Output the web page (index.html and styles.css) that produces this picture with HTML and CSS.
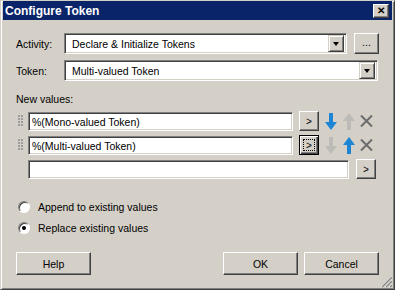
FILE: index.html
```html
<!DOCTYPE html>
<html lang="en">
<head>
<meta charset="UTF-8">
<title>Configure Token</title>
<link rel="stylesheet" href="styles.css">
</head>
<body>
<div class="window">
  <div class="titlebar">
    <span class="title">Configure Token</span>
    <span class="close">&#x2715;</span>
  </div>

  <div class="content">
    <div class="row first">
      <span class="label">Activity:</span>
      <div class="combo w283">
        <span class="combo-text">Declare &amp; Initialize Tokens</span>
        <span class="drop"><i></i></span>
      </div>
      <span class="btn dots">...</span>
    </div>

    <div class="row second">
      <span class="label">Token:</span>
      <div class="combo w314">
        <span class="combo-text">Multi-valued Token</span>
        <span class="drop"><i></i></span>
      </div>
    </div>

    <div class="section">New values:</div>

    <div class="values">
      <div class="vrow">
        <span class="grip"></span>
        <div class="field w265">%(Mono-valued Token)</div>
        <span class="btn small">&gt;</span>
        <svg class="arrow" width="12" height="17" viewBox="0 0 12 17"><path class="blue" d="M4 0h4v9h4l-6 8-6-8h4z"/></svg>
        <svg class="arrow up" width="12" height="17" viewBox="0 0 12 17"><path class="grey" d="M4 17h4v-9h4l-6-8-6 8h4z"/></svg>
        <svg class="cross" width="13" height="12" viewBox="0 0 13 12"><path d="M1 0.5l11 11M12 0.5l-11 11"/></svg>
      </div>
      <div class="vrow">
        <span class="grip"></span>
        <div class="field w265">%(Multi-valued Token)</div>
        <span class="btn small focus"><b>&gt;</b></span>
        <svg class="arrow" width="12" height="17" viewBox="0 0 12 17"><path class="grey" d="M4 0h4v9h4l-6 8-6-8h4z"/></svg>
        <svg class="arrow up" width="12" height="17" viewBox="0 0 12 17"><path class="blue" d="M4 17h4v-9h4l-6-8-6 8h4z"/></svg>
        <svg class="cross" width="13" height="12" viewBox="0 0 13 12"><path d="M1 0.5l11 11M12 0.5l-11 11"/></svg>
      </div>
      <div class="vrow">
        <span class="grip blank"></span>
        <div class="field w321"></div>
        <span class="btn small last">&gt;</span>
      </div>
    </div>

    <div class="options">
      <label class="option"><span class="radio"></span>Append to existing values</label>
      <label class="option"><span class="radio checked"></span>Replace existing values</label>
    </div>

    <div class="buttons">
      <span class="btn push">Help</span>
      <div class="right">
        <span class="btn push">OK</span>
        <span class="btn push">Cancel</span>
      </div>
    </div>
  </div>

  <svg class="sizegrip" width="13" height="13" viewBox="0 0 13 13">
    <path class="hl" d="M12 1L1 12M12 5L5 12M12 9L9 12"/>
    <path class="sh" d="M12 2L2 12M12 6L6 12M12 10L10 12"/>
  </svg>
</div>
</body>
</html>
```

FILE: styles.css
```css
:root{
  --face:#d4d0c8;
  --shadow:#808080;
  --dark:#404040;
  --navy:#0a246a;
}
*{box-sizing:border-box;margin:0;padding:0;}
body{background:var(--face);font-family:"Liberation Sans",Arial,sans-serif;font-size:10.5px;color:#000;}

.window{position:relative;width:395px;height:290px;background:var(--face);border:1px solid;border-color:var(--face) var(--dark) var(--dark) var(--face);box-shadow:inset 1px 1px #fff,inset -1px -1px var(--shadow);}
.titlebar{display:flex;align-items:center;justify-content:space-between;height:19px;margin:0 2px;background:var(--navy);color:#fff;padding:0 3px 0 2px;}
.title{font-weight:bold;font-size:12px;}
.close{display:flex;align-items:center;justify-content:center;width:16px;height:14px;background:var(--face);color:#000;font-size:10px;font-weight:bold;border:1px solid;border-color:#fff var(--dark) var(--dark) #fff;box-shadow:inset -1px -1px var(--shadow);}

.content{padding:0 15px;}
.row{display:flex;align-items:center;height:21px;}
.row.first{margin-top:13px;}
.row.second{margin-top:6px;}
.label{width:48px;}

.combo{display:flex;align-items:center;justify-content:space-between;height:21px;background:#fff;border:1px solid;border-color:var(--shadow) #fff #fff var(--shadow);box-shadow:inset 1px 1px var(--dark),inset -1px -1px var(--face);padding:2px;}
.combo-text{padding-left:5px;}
.w283{width:283px;}
.w314{width:314px;}
.drop{display:flex;align-items:center;justify-content:center;width:16px;height:17px;background:var(--face);border:1px solid;border-color:var(--face) var(--dark) var(--dark) var(--face);box-shadow:inset 1px 1px #fff,inset -1px -1px var(--shadow);}
.drop i{width:0;height:0;border-left:3.5px solid transparent;border-right:3.5px solid transparent;border-top:4px solid #000;}

.btn{display:flex;align-items:center;justify-content:center;background:var(--face);border:1px solid;border-color:#fff var(--dark) var(--dark) #fff;box-shadow:inset -1px -1px var(--shadow);}
.dots{width:25px;height:21px;margin-left:7px;padding-bottom:4px;}

.section{margin-top:12px;line-height:13px;}

.values{display:flex;flex-direction:column;gap:4px;margin-top:5px;}
.vrow{display:flex;align-items:center;height:20px;}
.grip{width:5px;height:12px;margin:0 5px 0 2px;background-image:radial-gradient(circle at 1px 1px,#9c9c9c 1px,transparent 1.1px);background-size:3px 3px;}
.grip.blank{background:none;}
.field{height:19px;background:#fff;border:1px solid;border-color:var(--shadow) #fff #fff var(--shadow);box-shadow:inset 1px 1px var(--dark),inset -1px -1px var(--face);padding:2px 3px;line-height:14px;white-space:nowrap;}
.w265{width:265px;}
.w321{width:321px;}
.small{width:20px;height:20px;margin-left:6px;font-size:10px;}
.small.last{margin-left:7px;}
.small.focus{border:1px solid #000;box-shadow:inset 1px 1px #fff,inset -1px -1px var(--dark),inset -2px -2px var(--shadow);}
.small.focus b{font-weight:normal;display:flex;align-items:center;justify-content:center;width:12px;height:12px;border:1px dotted #000;}
.arrow{margin-left:6px;}
.arrow.up{margin-left:6px;}
.blue{fill:#1c86d4;}
.grey{fill:#bdbbb7;}
.cross{margin-left:5px;}
.cross path{stroke:#6b6b6b;stroke-width:2;fill:none;}

.options{display:flex;flex-direction:column;gap:5px;margin-top:20px;}
.option{display:flex;align-items:center;height:16px;gap:8px;padding-left:2px;}
.radio{position:relative;width:12px;height:12px;border-radius:50%;background:#fff;border:1px solid;border-color:var(--shadow) #fff #fff var(--shadow);box-shadow:inset 1px 1px var(--dark);}
.radio.checked::after{content:"";position:absolute;left:3px;top:3px;width:4px;height:4px;border-radius:50%;background:#000;}

.buttons{display:flex;justify-content:space-between;margin-top:16px;}
.right{display:flex;gap:6px;}
.push{width:75px;height:23px;}

.sizegrip{position:absolute;right:1px;bottom:1px;}
.sizegrip .hl{stroke:#fff;stroke-width:1;}
.sizegrip .sh{stroke:var(--shadow);stroke-width:1.2;}
```
